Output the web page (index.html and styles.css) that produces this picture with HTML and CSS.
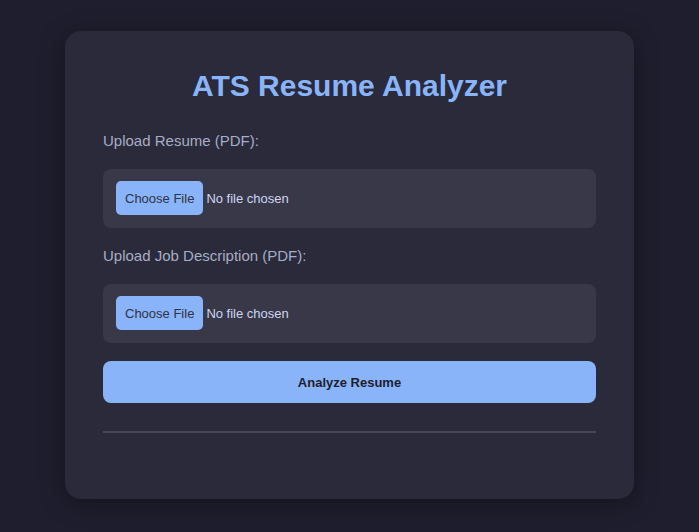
FILE: index.html
```html
<!DOCTYPE html>
<html lang="en">
<head>
<meta charset="utf-8">
<title>ATS Resume Analyzer</title>
<link rel="stylesheet" href="styles.css">
</head>
<body>
<main class="card">
  <h1 class="title">ATS Resume Analyzer</h1>
  <form class="form">
    <label class="label" for="resume">Upload Resume (PDF):</label>
    <input class="file" id="resume" type="file" accept="application/pdf">
    <label class="label" for="jd">Upload Job Description (PDF):</label>
    <input class="file file-last" id="jd" type="file" accept="application/pdf">
    <button class="submit" type="button">Analyze Resume</button>
  </form>
  <hr class="divider">
</main>
</body>
</html>
```

FILE: styles.css
```css
* { box-sizing: border-box; }
html, body { margin: 0; padding: 0; }
body {
  background: #1e1e2e;
  font-family: "Liberation Sans", Arial, sans-serif;
  color: #cdd6f4;
  min-height: 532px;
  padding-top: 31px;
}
.card {
  width: 569px;
  height: 468px;
  margin: 0 0 0 65px;
  background: #2a2a3b;
  border-radius: 16px;
  box-shadow: 0 4px 24px rgba(0, 0, 0, 0.35);
  padding: 38px 38px 0 38px;
}
.title {
  margin: 0 0 29px 0;
  text-align: center;
  font-size: 30px;
  line-height: 34px;
  font-weight: bold;
  color: #89b4fa;
}
.form {
  display: flex;
  flex-direction: column;
}
.label {
  font-size: 15px;
  line-height: 17px;
  color: #a6adc8;
  margin-bottom: 20px;
}
.file {
  display: block;
  width: 100%;
  height: 59px;
  background: #393848;
  border-radius: 8px;
  padding: 12px 13px;
  font-family: "Liberation Sans", Arial, sans-serif;
  font-size: 13px;
  color: #cdd6f4;
  margin-bottom: 19px;
  border: none;
}
.file-last { margin-bottom: 18px; }
.file::file-selector-button {
  height: 34px;
  padding: 0 9px;
  margin-right: 3px;
  border: none;
  border-radius: 5px;
  background: #89b4fa;
  color: #313244;
  font-family: "Liberation Sans", Arial, sans-serif;
  font-size: 13px;
}
.submit {
  height: 42px;
  width: 100%;
  border: none;
  border-radius: 8px;
  background: #89b4fa;
  color: #1e1e2e;
  font-family: "Liberation Sans", Arial, sans-serif;
  font-size: 13px;
  font-weight: bold;
}
.divider {
  margin: 28px 0 0 0;
  border: none;
  border-top: 2px solid #45475a;
  height: 0;
}
```
